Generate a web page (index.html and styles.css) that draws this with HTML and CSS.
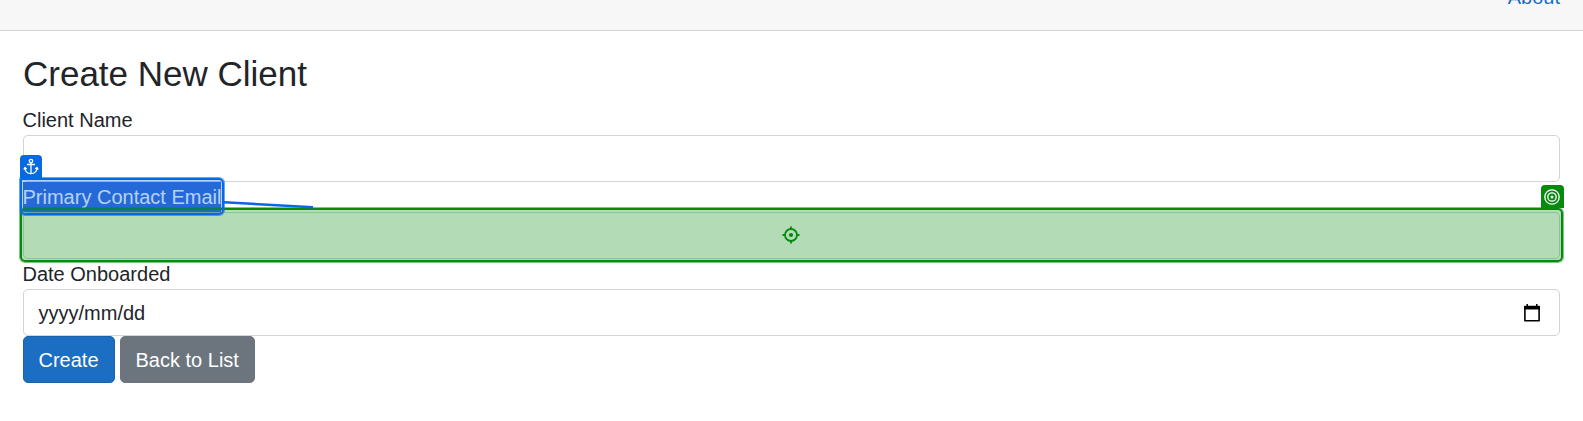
FILE: index.html
```html
<!DOCTYPE html>
<html lang="en">
<head>
<meta charset="utf-8">
<title>Create New Client</title>
<link rel="stylesheet" href="styles.css">
</head>
<body>
<header class="topbar"><a class="nav-link">About</a></header>
<main class="content">
  <h3 class="title">Create New Client</h3>
  <form class="form">
    <label class="label">Client Name</label>
    <div class="field"></div>
    <div class="label"><span class="anchor-text">Primary Contact Email</span></div>
    <div class="field"></div>
    <label class="label">Date Onboarded</label>
    <div class="field date"><span>yyyy/mm/dd</span>
      <svg class="calendar" width="18" height="20" viewBox="0 0 18 20"><path d="M1.900 3.500h14.200v14.300H1.900z" fill="none" stroke="#000" stroke-width="1.600" stroke-linejoin="round"/><path d="M1.100 3h15.800v3.500H1.100zM3.500 1h1.500v3h-1.500zM13 1h1.500v3h-1.500z"/></svg>
    </div>
    <div class="actions"><a class="btn primary">Create</a><a class="btn secondary">Back to List</a></div>
  </form>
</main>
<div class="target-box">
  <svg width="18" height="18" viewBox="0 0 18 18" fill="none" stroke="#048b0d" stroke-width="1.800"><circle cx="9" cy="9" r="6"/><path d="M9 .5v2.500M9 15v2.500M.5 9h2.500M15 9h2.500"/><circle cx="9" cy="9" r="2.100" fill="#048b0d" stroke="none"/></svg>
</div>
<div class="anchor-box"></div>
<svg class="connector" width="92" height="10" viewBox="0 0 92 10"><path d="M0 2.300L89 7.200" stroke="#0569e3" stroke-width="2.400" fill="none"/></svg>
<div class="badge anchor-badge">
  <svg width="16" height="18" viewBox="0 0 16 18" fill="none" stroke="#fff" stroke-width="1.300"><circle cx="8" cy="3" r="1.700"/><path d="M8 4.700v11M4 6.500h8M1.800 9.500c.2 3.900 2.600 6 6.200 6.200 3.600-.2 6-2.300 6.200-6.200M.8 11.500l1.200-2 1.800 1.500M15.200 11.500l-1.200-2-1.800 1.500"/></svg>
</div>
<div class="badge target-badge">
  <svg width="18" height="18" viewBox="0 0 18 18" fill="none" stroke="#fff" stroke-width="1.300"><circle cx="9" cy="9" r="7.200"/><circle cx="9" cy="9" r="4.200"/><circle cx="9" cy="9" r="1.500" fill="#fff" stroke="none"/></svg>
</div>
</body>
</html>
```
FILE: styles.css
```css
* { box-sizing: border-box; }
body {
  margin: 0;
  height: 421px;
  overflow: hidden;
  position: relative;
  background: #fff;
  color: #212529;
  font: 20px/30px "Liberation Sans", Arial, sans-serif;
}
.topbar {
  height: 31px;
  overflow: hidden;
  display: flex;
  justify-content: flex-end;
  align-items: flex-end;
  padding: 0 23px 18px 0;
  background: #f7f7f7;
  border-bottom: 1px solid #d3d3d3;
}
.nav-link { color: #1b6ec2; }
.content { padding: 22px 23px 0; }
.title { margin: 0 0 10px; font-size: 35px; font-weight: 400; line-height: 42px; }
.label { display: block; height: 30px; margin-left: -0.5px; }
.field {
  height: 47px;
  border: 1px solid #ced4da;
  border-radius: 5px;
  background: #fff;
}
.date { display: flex; align-items: center; justify-content: space-between; padding: 0 18px 0 14.500px; }
.actions { display: flex; gap: 5px; }
.btn { height: 47px; padding: 8px 15px 0 14.500px; border-radius: 5px; border: 1px solid; color: #fff; }
.primary { width: 92px; background: #1b6ec2; border-color: #1861ac; }
.secondary { width: 135px; background: #6c757d; border-color: #6c757d; }

/* Highlights drawn over the form */
.target-box {
  position: absolute;
  left: 20px;
  top: 208px;
  width: 1543px;
  height: 54px;
  display: flex;
  align-items: center;
  justify-content: center;
  padding-right: 1px;
  border: 2px solid #048b0d;
  border-radius: 5px;
  background: rgba(4, 139, 13, .3);
  box-shadow: 0 0 0 1px rgba(4, 139, 13, .5);
}
.anchor-box {
  position: absolute;
  left: 20px;
  top: 178px;
  width: 204px;
  height: 37px;
  border: 2px solid #0569e3;
  border-radius: 1px 5px 5px 5px;
  background: rgba(5, 105, 227, .3);
  box-shadow: 0 0 0 1px rgba(5, 105, 227, .6);
}
.anchor-text { display: inline-block; width: 198px; height: 30px; background: #3367d1; color: #fff; white-space: nowrap; }
.connector { position: absolute; left: 224px; top: 200px; }
.badge { position: absolute; display: flex; align-items: center; justify-content: center; height: 23px; }
.anchor-badge { left: 20px; top: 155px; width: 22px; background: #0569e3; border-radius: 4px 4px 0 0; }
.target-badge { left: 1541px; top: 185px; width: 22.500px; background: #048b0d; border-radius: 4px 4px 0 0; }
```
